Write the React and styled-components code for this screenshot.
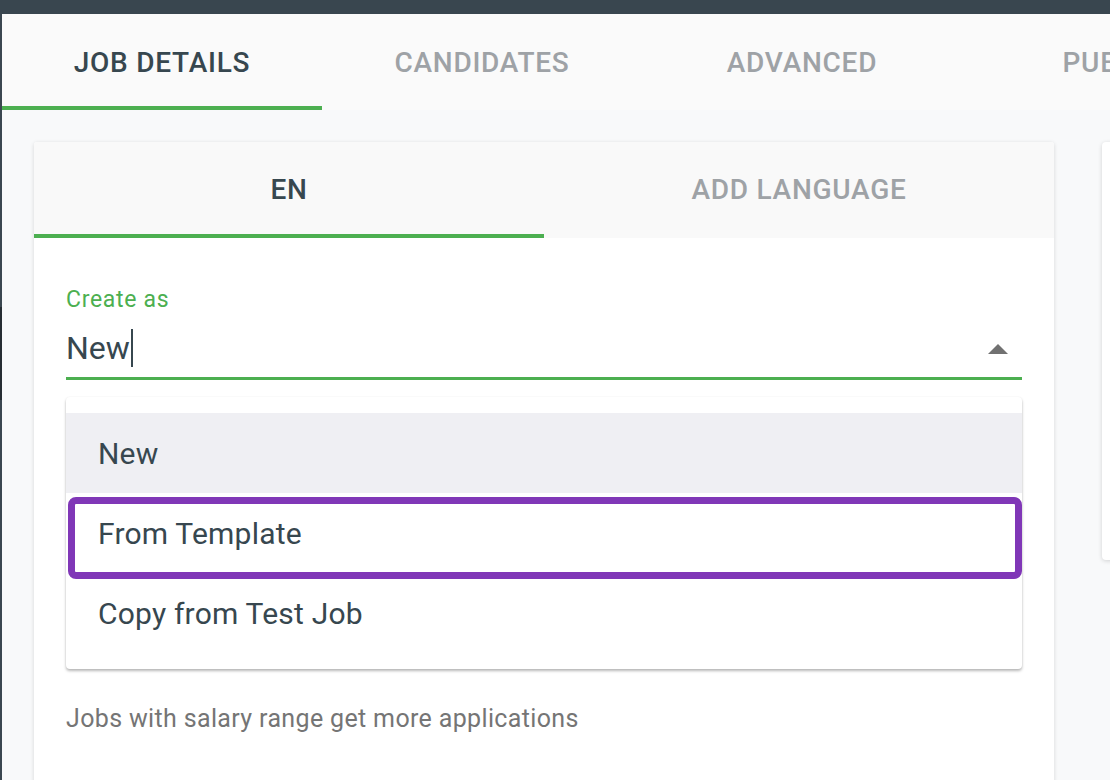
import React from "react";
import styled, { createGlobalStyle } from "styled-components";

const Global = createGlobalStyle`
  html, body {
    margin: 0;
    padding: 0;
    background: #f8f9fa;
    font-family: Roboto, "Liberation Sans", Arial, sans-serif;
    overflow: hidden;
  }
`;

const TOP_TABS = ["JOB DETAILS", "CANDIDATES", "ADVANCED", "PUBLISH"];
const LANG_TABS = ["EN", "ADD LANGUAGE"];
const OPTIONS = ["New", "From Template", "Copy from Test Job"];

const App = () => {
  return (
    <S.Page>
      <Global />
      <S.TopBar />
      <S.Body>
        <S.Rail />
        <S.Main>
          <S.TabBar>
            {TOP_TABS.map((t, i) => (
              <S.TopTab key={t} $active={i === 0}>
                {t}
              </S.TopTab>
            ))}
          </S.TabBar>

          <S.Content>
            <S.Card>
              <S.CardTabs>
                {LANG_TABS.map((t, i) => (
                  <S.LangTab key={t} $active={i === 0}>
                    {t}
                  </S.LangTab>
                ))}
              </S.CardTabs>

              <S.CardBody>
                <S.Label>Create as</S.Label>
                <S.Field>
                  <S.Value>
                    New
                    <S.Caret />
                  </S.Value>
                  <S.Arrow viewBox="0 0 20 10">
                    <path d="M0 10 L10 0 L20 10 Z" fill="#717171" />
                  </S.Arrow>
                </S.Field>

                <S.Menu>
                  {OPTIONS.map((o, i) => (
                    <S.Option key={o} $hover={i === 0} $focus={i === 1}>
                      {o}
                    </S.Option>
                  ))}
                </S.Menu>

                <S.Helper>Jobs with salary range get more applications</S.Helper>
              </S.CardBody>
            </S.Card>

            <S.SideCard />
          </S.Content>
        </S.Main>
      </S.Body>
    </S.Page>
  );
};

const S = {
  Page: styled.div`
    width: 1110px;
    height: 780px;
    display: flex;
    flex-direction: column;
    overflow: hidden;
  `,
  TopBar: styled.div`
    height: 14px;
    flex: 0 0 14px;
    background: #39464f;
  `,
  Body: styled.div`
    flex: 1;
    display: flex;
    min-height: 0;
  `,
  Rail: styled.div`
    width: 2px;
    flex: 0 0 2px;
    background: linear-gradient(
      to bottom,
      #3b4750 0,
      #3b4750 293px,
      #262d33 293px,
      #262d33 386px,
      #3b4750 386px
    );
  `,
  Main: styled.div`
    flex: 1;
    display: flex;
    flex-direction: column;
    min-width: 0;
  `,
  TabBar: styled.div`
    display: flex;
    flex: 0 0 96px;
    height: 96px;
    background: #fafafa;
  `,
  TopTab: styled.div`
    flex: 0 0 320px;
    display: flex;
    align-items: center;
    justify-content: center;
    padding-top: 4px;
    box-sizing: border-box;
    font-size: 28px;
    font-weight: 500;
    letter-spacing: 0.75px;
    white-space: nowrap;
    color: ${(p) => (p.$active ? "#37474f" : "#9ea2a6")};
    border-bottom: 4px solid ${(p) => (p.$active ? "#4caf50" : "transparent")};
  `,
  Content: styled.div`
    display: flex;
    align-items: flex-start;
    gap: 48px;
    padding: 32px 0 0 32px;
  `,
  Card: styled.div`
    flex: 0 0 1020px;
    height: 700px;
    background: #fff;
    border-radius: 3px;
    box-shadow: 0 1px 4px rgba(0, 0, 0, 0.14);
    display: flex;
    flex-direction: column;
  `,
  CardTabs: styled.div`
    display: flex;
    flex: 0 0 96px;
    height: 96px;
    background: #f9f9f9;
    border-radius: 3px 3px 0 0;
  `,
  LangTab: styled.div`
    flex: 1;
    display: flex;
    align-items: center;
    justify-content: center;
    padding-top: 2px;
    box-sizing: border-box;
    font-size: 28px;
    font-weight: 500;
    letter-spacing: 0.75px;
    color: ${(p) => (p.$active ? "#37474f" : "#9ea2a6")};
    border-bottom: 4px solid ${(p) => (p.$active ? "#4caf50" : "transparent")};
  `,
  CardBody: styled.div`
    padding: 49px 32px 0 32px;
    display: flex;
    flex-direction: column;
  `,
  Label: styled.div`
    font-size: 23px;
    line-height: 26px;
    letter-spacing: 0.7px;
    color: #4caf50;
  `,
  Field: styled.div`
    margin-top: 15px;
    display: flex;
    align-items: center;
    padding: 0 14px 9px 0;
    border-bottom: 3px solid #4caf50;
  `,
  Value: styled.div`
    flex: 1;
    display: flex;
    align-items: center;
    font-size: 32px;
    line-height: 40px;
    color: #37474f;
  `,
  Caret: styled.span`
    display: inline-block;
    width: 2px;
    height: 38px;
    margin-left: 1px;
    background: #37474f;
  `,
  Arrow: styled.svg`
    width: 20px;
    height: 10px;
    margin-top: 2px;
  `,
  Menu: styled.div`
    margin-top: 17px;
    padding: 16px 0;
    background: #fff;
    border-radius: 4px;
    box-shadow: 0 2px 3px rgba(0, 0, 0, 0.28), 0 0 2px rgba(0, 0, 0, 0.06);
  `,
  Option: styled.div`
    position: relative;
    z-index: ${(p) => (p.$focus ? 1 : 0)};
    height: 80px;
    display: flex;
    align-items: center;
    padding-left: 32px;
    font-size: 30px;
    letter-spacing: 0.2px;
    color: #37474f;
    background: ${(p) => (p.$hover ? "#efeff3" : "#fff")};

    &::after {
      content: "";
      display: ${(p) => (p.$focus ? "block" : "none")};
      position: absolute;
      top: 4px;
      left: 2px;
      right: 0;
      bottom: -6px;
      border: 7px solid #8037b7;
      border-radius: 8px;
      pointer-events: none;
    }
  `,
  Helper: styled.div`
    margin-top: 36px;
    font-size: 25px;
    line-height: 28px;
    color: #757575;
    letter-spacing: 0.35px;
  `,
  SideCard: styled.div`
    flex: 0 0 300px;
    height: 418px;
    background: #fff;
    border-radius: 4px;
    box-shadow: 0 1px 4px rgba(0, 0, 0, 0.16);
  `,
};

export default App;
